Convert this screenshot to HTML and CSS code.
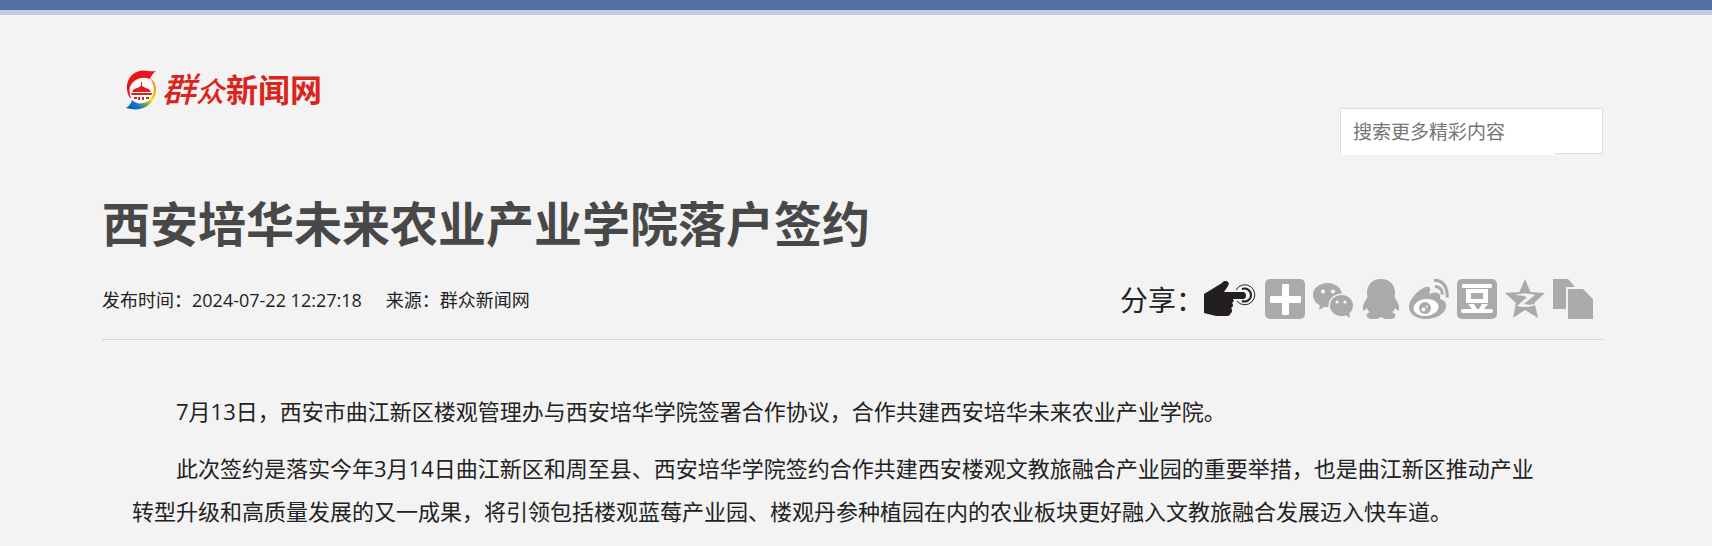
FILE: index.html
```
<!DOCTYPE html>
<html lang="zh-CN">
<head>
  <meta charset="UTF-8" />
  <meta name="viewport" content="width=device-width, initial-scale=1.0"/>
  <title>西安培华未来农业产业学院落户签约</title>
  <link rel="stylesheet" href="styles.css">
</head>
<body>
  <div class="top-bar"></div>
  <div class="page">
    <header class="header">
      <a class="logo" href="#">
        <svg class="logo-mark" viewBox="0 0 30 40" aria-hidden="true">
          <defs>
            <linearGradient id="swoosh" x1="0" y1="1" x2="1" y2="0">
              <stop offset="0" stop-color="#0a4fb0"/>
              <stop offset="0.25" stop-color="#1678c8"/>
              <stop offset="0.42" stop-color="#6db04c"/>
              <stop offset="0.58" stop-color="#ffe000"/>
              <stop offset="1" stop-color="#f07010"/>
            </linearGradient>
          </defs>
          <path fill="url(#swoosh)" d="M24 8c6 4 8 13 4 20-4 9-14 14-28 10 3-2 5-4 6-8 3 3 7 4 11 3 11-2 14-15 7-25z"/>
          <path fill="#e8151c" d="M4 28C-3 17 2 2 16 .5 21 0 25 2 30 1c-3 2-5 5-6 8C13 5 4 12 3.500 20c0 3 .5 5 1.500 8z"/>
          <circle cx="15.500" cy="21" r="11.500" fill="#fff"/>
          <path fill="#d8201c" d="M15 12h1v4c2 1 3 2 7 3l2 3H6l2-3c4-1 5-2 7-3zM5 23h21v1l-1 1H6l-1-1zM8 27h3v2H8zm4 0h2v3h-2zm4 0h2v3h-2zm4 0h3v2h-3z"/>
        </svg>
        <span class="logo-script"><span class="logo-script-big">群</span>众</span>
        <span class="logo-name">新闻网</span>
      </a>
      <form class="search">
        <input class="search-input" type="text" placeholder="搜索更多精彩内容" aria-label="搜索更多精彩内容">
      </form>
    </header>

    <main>
      <h1 class="title">西安培华未来农业产业学院落户签约</h1>
      <div class="info">
        <div class="meta">
          <span>发布时间：2024-07-22 12:27:18</span>
          <span>来源：群众新闻网</span>
        </div>
        <div class="share">
          <span class="share-label">分享：</span>
          <svg class="share-hand" viewBox="0 0 52 35" aria-hidden="true">
            <path fill="#231f20" d="M0 13 18 2c3-4 9-1 6 3l-4 6h20a4 4 0 0 1 0 7H29c1 2 1 3-1 4 2 2 1 4-1 5 2 2 1 5-1 6 0 1-1 2-3 2H12L0 32z"/>
            <path fill="none" stroke="#231f20" stroke-width="2" d="M38 8a6.500 6.500 0 1 1 0 12"/>
            <path fill="none" stroke="#231f20" d="M32 9a10 10 0 1 1 1 11"/>
          </svg>
          <div class="share-icons">
            <button class="share-btn" type="button" aria-label="更多">
              <svg viewBox="0 0 40 40"><rect width="40" height="40" rx="5"/><path class="cut" d="M17 6q0-1 1-1h5q1 0 1 1v11h11q1 0 1 1v5q0 1-1 1H24v11q0 1-1 1h-5q-1 0-1-1V24H6q-1 0-1-1v-5q0-1 1-1h11z"/></svg>
            </button>
            <button class="share-btn" type="button" aria-label="微信">
              <svg viewBox="0 0 40 40"><ellipse cx="14.500" cy="16" rx="14.500" ry="12"/><path d="m7 25-1 6 7-4z"/><ellipse class="gap" cx="28.500" cy="26.500" rx="13" ry="12"/><ellipse cx="28.500" cy="26.500" rx="11.500" ry="10.500"/><path d="m31 35 6 4-1-7z"/><circle class="cut" cx="10" cy="12.500" r="2"/><circle class="cut" cx="20" cy="12.500" r="2"/><circle class="cut" cx="24" cy="23" r="1.500"/><circle class="cut" cx="32" cy="23" r="1.500"/></svg>
            </button>
            <button class="share-btn" type="button" aria-label="QQ">
              <svg viewBox="0 0 40 40"><path d="M20 0c9 0 14 6 14 14 0 1 0 2-.5 3l1 3c3 4 4 8 3.500 11-1 1-2 0-4-2-.5 2-1 3-3 4 3 1 4 3 3 5-2 3-10 3-14 0-4 3-12 3-14 0-1-2 0-4 3-5-2-1-2.500-2-3-4-2 2-3 3-4 2-.5-3 .5-7 3.500-11l1-3C6 16 6 15 6 14 6 6 11 0 20 0z"/></svg>
            </button>
            <button class="share-btn" type="button" aria-label="微博">
              <svg viewBox="0 0 40 40"><path d="M20 8c2 1 1 4 0 7 6-3 13-2 11 5 4 1 7 4 6 8-1 7-10 12-20 12S0 35 0 28C0 19 14 6 20 8z"/><ellipse class="cut" cx="17" cy="28.500" rx="12.500" ry="8.500" transform="rotate(-6 17 28.500)"/><circle cx="16" cy="29" r="6"/><circle class="cut" cx="14.500" cy="30.500" r="2"/><circle class="cut" cx="18" cy="27.500" r="1"/><path class="line" d="M25 1.500c9-1 14 7 13 17M26 7.500c5 0 8 4 7 8"/></svg>
            </button>
            <button class="share-btn" type="button" aria-label="豆瓣">
              <svg viewBox="0 0 40 40"><rect width="40" height="40" rx="5"/><path class="cut" d="M6 5h28q1 0 1 2t-1 2H6Q5 9 5 7t1-2zM9 10h22v14H9zM11 25h6l3 5h2l3-5h6l-4 5h7q2 0 2 2t-2 2H6q-2 0-2-2t2-2h9z"/><path d="M14 14h12v6H14z"/></svg>
            </button>
            <button class="share-btn" type="button" aria-label="QQ空间">
              <svg viewBox="0 0 40 40"><path d="m20 0 5.500 13L40 14 29.500 23.500 33 39l-13-8L8 39l3-15L0 14l14.500-1z"/><path class="gap" d="M10 16c7-2 13-2 20 0L19 25c5 1 9 1 15-1-5 4-14 5-22 3l10-9c-4-1-7-2-12-2z"/></svg>
            </button>
            <button class="share-btn" type="button" aria-label="复制">
              <svg viewBox="0 0 40 40"><path d="M0 0h15l7 8h-9v22H0zM15 10h15l10 10v20H15z"/></svg>
            </button>
          </div>
        </div>
      </div>

      <article class="content">
        <p>7月13日，西安市曲江新区楼观管理办与西安培华学院签署合作协议，合作共建西安培华未来农业产业学院。</p>
        <p>此次签约是落实今年3月14日曲江新区和周至县、西安培华学院签约合作共建西安楼观文教旅融合产业园的重要举措，也是曲江新区推动产业转型升级和高质量发展的又一成果，将引领包括楼观蓝莓产业园、楼观丹参种植园在内的农业板块更好融入文教旅融合发展迈入快车道。</p>
      </article>
    </main>
  </div>
</body>
</html>
```
FILE: styles.css
```
* {
  box-sizing: border-box;
}

body {
  margin: 0;
  background: #f3f3f3;
  color: #222;
  font-family: "Open Sans", "Noto Sans CJK SC", sans-serif;
}

.top-bar {
  height: 15px;
  background: #5371a2;
  border-bottom: 5px solid #c0cce8;
}

.page {
  padding: 0 109px 0 102px;
}

.header {
  display: flex;
  justify-content: space-between;
  align-items: flex-end;
  padding-top: 45px;
}

.logo {
  display: flex;
  align-items: center;
  height: 60px;
  margin: 0 0 34px 24px;
  color: #d9251d;
  text-decoration: none;
  line-height: 60px;
}

.logo-mark {
  width: 30px;
  height: 40px;
  margin-right: 6px;
}

.logo-script {
  font-size: 28px;
  font-style: italic;
  font-weight: 500;
  margin-right: 2px;
}

.logo-script-big {
  font-size: 34px;
}

.logo-name {
  font-size: 32px;
  font-weight: bold;
}

.search {
  width: 263px;
  height: 46px;
  border: 1px solid #ddd;
  background: #fff;
}

.search-input {
  display: block;
  width: 214px;
  height: 46px;
  padding: 0 12px;
  border: 0;
  outline: 0;
  background: #fff;
  font-family: inherit;
  font-size: 19px;
}

.search-input::placeholder {
  color: #757575;
}

.title {
  margin: 34px 0 0;
  color: #484848;
  font-size: 48px;
  font-weight: bold;
  line-height: 72px;
}

.info {
  display: flex;
  justify-content: space-between;
  align-items: center;
  height: 80px;
  padding-bottom: 2px;
  border-bottom: 1px solid #d3d3d3;
}

.meta {
  display: flex;
  gap: 24px;
  font-size: 18px;
}

.share {
  display: flex;
  align-items: center;
  padding-right: 10px;
}

.share-label {
  font-size: 28px;
}

.share-hand {
  width: 52px;
  height: 35px;
  margin-right: 9px;
}

.share-icons {
  display: flex;
  gap: 8px;
}

.share-btn {
  width: 40px;
  height: 40px;
  padding: 0;
  border: 0;
  background: none;
  cursor: pointer;
}

.share-btn svg {
  display: block;
  fill: #aaa;
}

.share-btn .cut {
  fill: #fff;
}

.share-btn .gap {
  fill: #f3f3f3;
}

.share-btn .line {
  fill: none;
  stroke: #aaa;
  stroke-width: 3;
}

.content {
  padding: 50px 58px 12px 30px;
  font-size: 22px;
  line-height: 43px;
}

.content p {
  margin: 0 0 14px;
  text-indent: 2em;
}
```
